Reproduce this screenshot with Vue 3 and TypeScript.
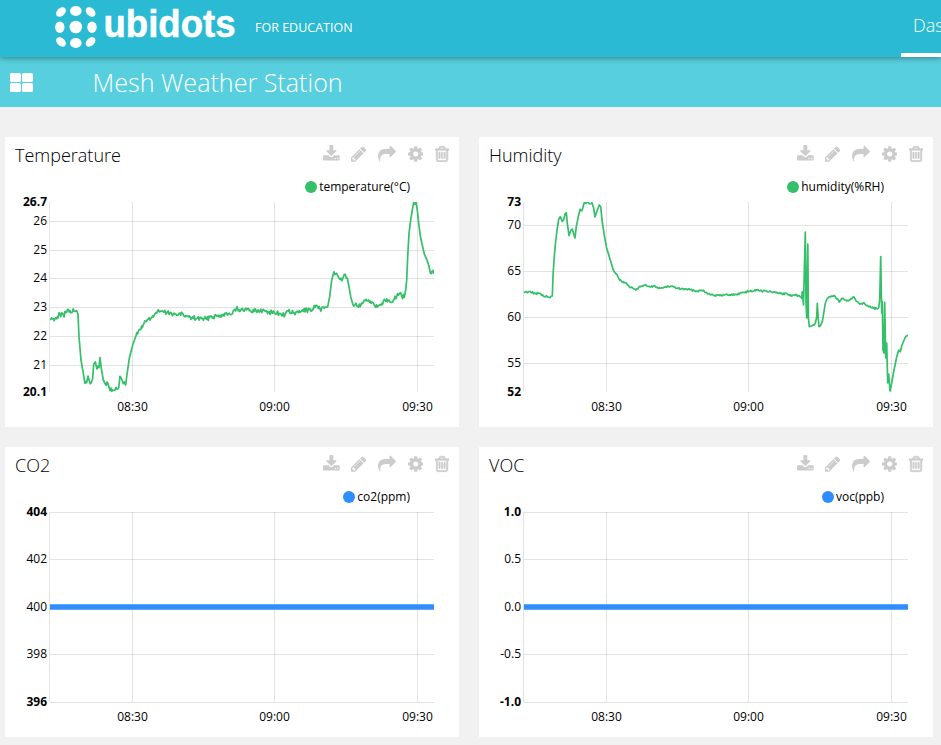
<script setup lang="ts">
interface Tick { y: number; label: string; bold?: boolean; line?: boolean }
interface Widget {
  title: string
  legend: string
  dotX: number
  color: string
  stroke: number
  path: string
  ticks: Tick[]
}

function trace(source: string, noise: number): string {
  const pts = source.trim().split(/\s+/).map((p) => p.split(',').map(Number))
  let seed = 7
  const rand = () => {
    seed = (seed * 1103515245 + 12345) % 2147483648
    return seed / 2147483648 - 0.5
  }
  const out: string[] = []
  pts.forEach(([x, y], i) => {
    out.push(`${x},${y}`)
    const next = pts[i + 1]
    if (!next) return
    const dx = next[0] - x
    const dy = next[1] - y
    const steps = Math.floor(dx / 0.8)
    if (Math.abs(dy) > dx * 1.6) return
    for (let s = 1; s < steps; s++) {
      const t = s / steps
      out.push(`${(x + dx * t).toFixed(1)},${(y + dy * t + rand() * noise).toFixed(1)}`)
    }
  })
  return 'M' + out.join('L')
}

const temperature = `0,117 3.3,116.7 7.3,114.7 10,111.8 13.3,113 16.7,110.3 20,108.7 24,109 26.7,108.7 28,112.3 29,134.7 31,158 33.3,171.3 35,181.3
36.7,180.7 38,174 39.3,179 41.3,180.7 42.7,176.3 43.7,162.3 45.3,160 47,167 49,165.7 50,155.7 51.3,166.3 53.3,178 55.3,182 58,181.7 60,188.7
62.7,188 66,185.3 68.7,186 70,174.3 71.3,176.3 73.3,181.7 75.7,183 76.7,174.7 79.3,156.3 82.7,143 86,133.7 90,127.3 94,121.3 98.3,117
101.7,115.7 105,111.7 110,109 113.3,110 116.7,111.3 120.7,110.3 123.3,112.3 128.3,112.7 133.3,112.7 136.7,114.3 141.7,116 146.7,116.3
151.7,116.7 156.7,117.3 160.7,114 166.7,114.3 171.7,112.7 176.7,111 180,112.3 183.3,108.7 185.7,109 187,104.5 188.3,109 190,109.5 195,107.3
200,108.3 206,108.7 210,109.3 214.3,108.3 219.3,110 224.3,110.7 230,111.7 235,113 238.3,109.3 243.3,111.3 248.3,110.7 251.7,109 256.7,107.7
260.7,109 265,105.3 270,107 274.3,106.3 277.7,104.7 279.7,94.7 281.7,78 284,69.7 286.7,71.3 289,76.3 292,78.7 294.3,72.3 297.3,76 298.7,83
300.7,94.7 303,102.7 306.7,103.3 310.3,104.7 312.7,101.3 315.3,98.7 318.7,98 322.7,100.3 325.7,105.3 328.3,103.7 331.7,101.3 334.3,97.3
338.3,98 343.3,98.3 346.7,94.7 349.3,91.7 351.7,94 354.3,95.3 355.7,88 356.7,78 357.7,54.7 359,31.3 360.7,18 362.3,8 363.7,.5 366,.5 367.3,8
368.7,21.3 370.7,36.3 372.7,44.7 374.3,52 376.7,57.3 378.7,63 380.3,70.7 382,69.3 383.7,72`

const humidity = `0,90.3 6,89.3 11,91.7 15.3,91.3 17.7,93.3 23.3,94.7 26,95.7 28.3,94 29,74.7 30,58 31.3,43 33,28 34.7,17.3 36.3,14.7 38.3,19.3
39.7,18 41,12 42.3,10.7 43.3,21.3 45,33.7 46.7,28.7 48.3,27 51,36 52.3,24.7 54.3,14.7 56,7.3 58,8.7 60,1.3 62.7,.6 65.3,1.7 68,.8 69.7,6.3
71,15 72.7,9.7 75.3,3 76.7,4.7 78,18 80,31.3 82.3,44.7 85.3,54.7 89.3,68 92.7,72 95,77 98.3,80.3 101.7,80.7 105.3,84.7 109.3,86.3 112,88
115.3,84.7 121,83.3 126,85 131,84.3 136,86.3 141,85.3 147.7,84 152.7,86.3 159.3,87 166,87.7 172.7,89 179.3,88.3 184.3,91.7 191,93.3 196,93.7
201,92.7 206,92.7 212.7,92.7 217.7,90.7 224.3,89.3 229.3,89 233.3,87.7 237.7,89 242.7,89.3 247.7,90 252,90.7 257.7,91.7 263.3,92 267.7,94.3
272.7,93 276,94.7 277.7,96.3 278.3,89.7 279.5,103 281.3,30 282,100 282.7,116 283.8,42 284.4,116 285.3,124.7 287.7,124 291.3,121.3 292.7,114.7 293.3,101.3
294.3,118 295,124.7 296.7,123 298.3,119.7 299.7,111.3 301.3,101.3 303.3,96.3 307.7,94 311,94.3 315.3,100 318.3,96.3 321.7,98.3 326,98
329.7,94.7 333.3,99.7 336.7,102 340,100.7 343.7,103.7 347.7,105.7 352.7,106.7 354.7,105.7 355.7,98 356.7,54.7 357.7,111 358.3,99.7 359,148
360,151 360.7,100.3 361.7,156 362.7,141 363.7,181 364.7,172 366,189 367.7,181 370,168 372.7,155 374.7,148 376.3,149.7 378,143 381,136 384,133`

const GREEN = '#35bf69'
const BLUE = '#2f8dff'

const widgets: Widget[] = [
  {
    title: 'Temperature', legend: 'temperature(°C)', dotX: 261, color: GREEN, stroke: 1.7, path: trace(temperature, 5),
    ticks: [
      { y: 0, label: '26.7', bold: true, line: false }, { y: 19, label: '26' }, { y: 48, label: '25' }, { y: 76, label: '24' },
      { y: 105, label: '23' }, { y: 134, label: '22' }, { y: 163, label: '21' }, { y: 190, label: '20.1', bold: true, line: false },
    ],
  },
  {
    title: 'Humidity', legend: 'humidity(%RH)', dotX: 269, color: GREEN, stroke: 1.7, path: trace(humidity, 1.8),
    ticks: [
      { y: 0, label: '73', bold: true, line: false }, { y: 23, label: '70' }, { y: 69, label: '65' },
      { y: 115, label: '60' }, { y: 161, label: '55' }, { y: 190, label: '52', bold: true, line: false },
    ],
  },
  {
    title: 'CO2', legend: 'co2(ppm)', dotX: 299, color: BLUE, stroke: 5.6, path: 'M0,95H384',
    ticks: [
      { y: 0, label: '404', bold: true }, { y: 47, label: '402' }, { y: 95, label: '400' },
      { y: 142, label: '398' }, { y: 190, label: '396', bold: true },
    ],
  },
  {
    title: 'VOC', legend: 'voc(ppb)', dotX: 304, color: BLUE, stroke: 5.6, path: 'M0,95H384',
    ticks: [
      { y: 0, label: '1.0', bold: true }, { y: 47, label: '0.5' }, { y: 95, label: '0.0' },
      { y: 142, label: '-0.5' }, { y: 190, label: '-1.0', bold: true },
    ],
  },
]

const times = [
  { x: 82, label: '08:30' },
  { x: 224, label: '09:00' },
  { x: 367, label: '09:30' },
]

const icons = [
  { name: 'download', x: 64, w: 1664, d: 'M1344 1344q0-26-19-45t-45-19-45 19-19 45 19 45 45 19 45-19 19-45zm256 0q0-26-19-45t-45-19-45 19-19 45 19 45 45 19 45-19 19-45zm128-224v320q0 40-28 68t-68 28h-1472q-40 0-68-28t-28-68v-320q0-40 28-68t68-28h465l135 136q58 56 136 56t136-56l136-136h464q40 0 68 28t28 68zm-325-569q17 41-14 70l-448 448q-18 19-45 19t-45-19l-448-448q-31-29-14-70 17-39 59-39h256v-448q0-26 19-45t45-19h256q26 0 45 19t19 45v448h256q42 0 59 39z' },
  { name: 'edit', x: 128, w: 1536, d: 'M491 1536l91-91-235-235-91 91v107h128v128h107zm523-928q0-22-22-22-10 0-17 7l-542 542q-7 7-7 17 0 22 22 22 10 0 17-7l542-542q7-7 7-17zm-54-192l416 416-832 832h-416v-416zm683 96q0 53-37 90l-166 166-416-416 166-165q36-38 90-38 53 0 91 38l235 234q37 39 37 91z' },
  { name: 'share', x: 0, w: 1792, d: 'M1792 640q0 26-19 45l-512 512q-19 19-45 19t-45-19-19-45v-256h-224q-98 0-175.500 6t-154 21.500-133 42.500-105.500 69.500-80 101-48.500 138.500-17.500 181q0 55 5 123 0 6 2.500 23.500t2.500 26.500q0 15-8.500 25t-23.500 10q-16 0-28-17-7-9-13-22t-13.500-30-10.500-24q-127-285-127-451 0-199 53-333 162-403 875-403h224v-256q0-26 19-45t45-19 45 19l512 512q19 19 19 45z' },
  { name: 'settings', x: 128, w: 1536, d: 'M1152 896q0-106-75-181t-181-75-181 75-75 181 75 181 181 75 181-75 75-181zm512-109v222q0 12-8 23t-20 13l-185 28q-19 54-39 91 35 50 107 138 10 12 10 25t-9 23q-27 37-99 108t-94 71q-12 0-26-9l-138-108q-44 23-91 38-16 136-29 186-7 28-36 28h-222q-14 0-24.500-8.500t-11.500-21.500l-28-184q-49-16-90-37l-141 107q-10 9-25 9-14 0-25-11-126-114-165-168-7-10-7-23 0-12 8-23 15-21 51-66.500t54-70.500q-27-50-41-99l-183-27q-13-2-21-12.500t-8-23.500v-222q0-12 8-23t19-13l186-28q14-46 39-92-40-57-107-138-10-12-10-24 0-10 9-23 26-36 98.500-107.500t94.500-71.500q13 0 26 10l138 107q44-23 91-38 16-136 29-186 7-28 36-28h222q14 0 24.500 8.500t11.500 21.500l28 184q49 16 90 37l142-107q9-9 24-9 13 0 25 10 129 119 165 170 7 8 7 22 0 12-8 23-15 21-51 66.500t-54 70.500q26 50 41 98l183 28q13 2 21 12.500t8 23.500z' },
  { name: 'delete', x: 192, w: 1408, d: 'M704 736v576q0 14-9 23t-23 9h-64q-14 0-23-9t-9-23v-576q0-14 9-23t23-9h64q14 0 23 9t9 23zm256 0v576q0 14-9 23t-23 9h-64q-14 0-23-9t-9-23v-576q0-14 9-23t23-9h64q14 0 23 9t9 23zm256 0v576q0 14-9 23t-23 9h-64q-14 0-23-9t-9-23v-576q0-14 9-23t23-9h64q14 0 23 9t9 23zm128 724v-948h-896v948q0 22 7 40.500t14.500 27 10.500 8.500h832q3 0 10.500-8.500t14.500-27 7-40.500zm-672-1076h448l-48-117q-7-9-17-11h-317q-10 2-17 11zm928 32v64q0 14-9 23t-23 9h-96v948q0 83-47 143.500t-113 60.500h-832q-66 0-113-58.500t-47-141.500v-952h-96q-14 0-23-9t-9-23v-64q0-14 9-23t23-9h309l70-167q15-37 54-63t79-26h320q40 0 79 26t54 63l70 167h309q14 0 23 9t9 23z' },
]
</script>

<template>
  <div class="page">
    <header class="topbar">
      <svg class="logo" width="190" height="57" viewBox="54 0 190 57">
        <g fill="#fff">
          <ellipse cx="61" cy="12" rx="5.6" ry="3.9" transform="rotate(-42 61 12)" />
          <ellipse cx="75.8" cy="11" rx="5.8" ry="5" />
          <ellipse cx="90.6" cy="12" rx="5.6" ry="3.9" transform="rotate(42 90.6 12)" />
          <ellipse cx="59.8" cy="27.2" rx="4.7" ry="5.7" />
          <circle cx="75.8" cy="27" r="6.3" />
          <ellipse cx="92" cy="27.2" rx="4.7" ry="5.7" />
          <ellipse cx="61" cy="41.9" rx="5.6" ry="3.9" transform="rotate(42 61 41.9)" />
          <ellipse cx="75.8" cy="43" rx="5.8" ry="5" />
          <ellipse cx="90.6" cy="41.9" rx="5.6" ry="3.9" transform="rotate(-42 90.6 41.9)" />
        </g>
        <text class="wordmark" x="103.500" y="37.300" textLength="132" lengthAdjust="spacingAndGlyphs">ubidots</text>
      </svg>
      <span class="edition">FOR EDUCATION</span>
      <nav class="nav"><a class="nav-item">Dashboard</a></nav>
    </header>

    <div class="subbar">
      <div class="tiles"><i></i><i></i><i></i><i></i></div>
      <h1>Mesh Weather Station</h1>
    </div>

    <main class="grid">
      <section v-for="w in widgets" :key="w.title" class="card">
        <div class="card-head">
          <h2>{{ w.title }}</h2>
          <div class="actions">
            <svg
              v-for="i in icons" :key="i.name" :class="i.name" :width="(i.w * 18) / 1792" height="18"
              :viewBox="`${i.x} 0 ${i.w} 1792`"
            ><path :d="i.d" /></svg>
          </div>
        </div>
        <svg class="chart" width="454" height="250" viewBox="-45 -25 454 250">
          <circle :cx="w.dotX" cy="-15" r="6" :fill="w.color" />
          <text class="legend" x="360" y="-11" text-anchor="end">{{ w.legend }}</text>
          <g class="rules">
            <rect x="-1" y="0" width="1" height="190" />
            <rect v-for="t in times" :key="t.label" :x="t.x" y="0" width="1" height="190" />
            <template v-for="t in w.ticks" :key="t.label">
              <rect v-if="t.line !== false" x="0" :y="t.y" width="384" height="1" />
            </template>
          </g>
          <text
            v-for="t in w.ticks" :key="t.label" :class="{ bold: t.bold }" x="-3" :y="t.y + 4"
            text-anchor="end"
          >{{ t.label }}</text>
          <text v-for="t in times" :key="t.label" :x="t.x + 0.5" y="209" text-anchor="middle">{{ t.label }}</text>
          <svg x="0" y="0" width="384" height="190" viewBox="0 0 384 190">
            <path :d="w.path" fill="none" :stroke="w.color" :stroke-width="w.stroke" stroke-linejoin="round" />
          </svg>
        </svg>
      </section>
    </main>
  </div>
</template>

<style>
body {
  background: #f1f1f1;
  overflow: hidden;
}
</style>

<style scoped>
.page {
  width: 941px;
  height: 745px;
  overflow: hidden;
  background: #f1f1f1;
  font-family: "Open Sans", "Noto Sans", sans-serif;
}
.topbar {
  position: relative;
  z-index: 1;
  display: flex;
  height: 57px;
  padding-left: 54px;
  background: #2bbad3;
  box-shadow: 0 1px 6px rgba(0, 0, 0, 0.4);
  color: #fff;
}
.logo {
  flex: none;
}
.wordmark {
  font: bold 38px "Liberation Sans", sans-serif;
  fill: #fff;
  stroke: #fff;
  stroke-width: 0.5px;
  stroke-linejoin: round;
}
.edition {
  flex: none;
  margin-left: 11px;
  font-size: 12.5px;
  line-height: 55px;
  white-space: nowrap;
}
.nav {
  margin-left: auto;
  flex: none;
  width: 40px;
  overflow: hidden;
}
.nav-item {
  display: block;
  box-sizing: border-box;
  width: 120px;
  height: 57px;
  padding-left: 12px;
  border-bottom: 4px solid #fff;
  font-size: 18px;
  font-weight: 300;
  line-height: 51px;
}
.subbar {
  display: flex;
  align-items: center;
  height: 50px;
  padding-left: 10px;
  background: #58cfde;
  color: #fff;
}
.tiles {
  display: grid;
  grid-template-columns: 11px 11px;
  grid-template-rows: 9px 9px;
  gap: 1px;
}
.tiles i {
  border-radius: 1.5px;
  background: #fff;
}
h1 {
  margin: 0 0 0 59.500px;
  font-size: 25.1px;
  font-weight: 300;
  line-height: 50px;
}
.grid {
  display: grid;
  grid-template-columns: 454px 454px;
  gap: 20px;
  padding: 30px 0 0 5px;
}
.card {
  height: 290px;
  background: #fff;
}
.card-head {
  display: flex;
  justify-content: space-between;
  height: 40px;
  padding: 0 10px;
}
h2 {
  margin: 0;
  font-size: 18px;
  font-weight: 300;
  line-height: 37px;
  color: #000;
}
.actions {
  display: flex;
  gap: 11.6px;
  padding-top: 8px;
}
.actions svg {
  fill: #ccc;
}
.actions .delete {
  stroke: #ccc;
  stroke-width: 60px;
}
.chart {
  display: block;
}
.chart text {
  font-size: 12px;
  fill: #000;
}
.chart .bold {
  font-weight: 700;
}
.rules {
  fill: rgba(0, 0, 0, 0.11);
}
</style>
